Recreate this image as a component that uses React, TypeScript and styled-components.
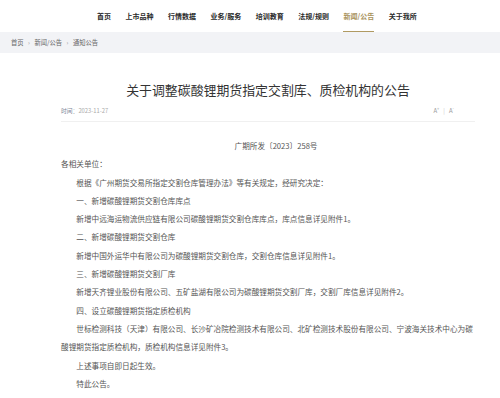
import React from 'react';
import styled, { createGlobalStyle } from 'styled-components';

const GlobalStyle = createGlobalStyle`
  body {
    margin: 0;
    background: #fff;
    font-family: "Noto Sans CJK SC", "Noto Sans", sans-serif;
  }
`;

const Header = styled.header`
  display: flex;
  gap: 14.5px;

  height: 32px;
  padding-left: 97px;
`;

const NavItem = styled.a<{ $active?: boolean }>`
  display: flex;
  align-items: center;

  height: 31px;
  border-bottom: 1px solid ${(p) => (p.$active ? '#b09a62' : 'transparent')};

  font-size: 7px;
  font-weight: 700;
  color: ${(p) => (p.$active ? '#a8925c' : '#2a2a2a')};
  text-decoration: none;
  white-space: nowrap;
`;

const Breadcrumb = styled.nav`
  display: flex;
  align-items: center;
  gap: 4.5px;

  height: 21px;
  padding-left: 11px;

  background: #f2f3f6;

  font-size: 6.3px;
  color: #666;
`;

const Crumb = styled.span``;

const CrumbSep = styled.span`
  color: #999;
  font-size: 6px;
`;

const Main = styled.main`
  padding: 0 25px 0 61px;
`;

const Title = styled.h1`
  margin: 27px 0 0;

  font-size: 12.9px;
  font-weight: 400;
  line-height: 20px;
  text-align: center;
  color: #333;
`;

const MetaRow = styled.div`
  display: flex;
  align-items: center;
  justify-content: space-between;

  height: 10px;
  margin-top: 5px;
  padding-bottom: 6px;
  border-bottom: 1px solid #f0f0f0;

  font-size: 5.8px;
  color: #aaa;
`;

const DateLabel = styled.span`
  color: #7a8396;
`;

const FontTools = styled.div`
  display: flex;
  align-items: center;
  gap: 4px;

  margin-right: 21px;

  color: #999;
  font-size: 6px;

  sup {
    font-size: 4px;
  }
`;

const ToolSep = styled.span`
  color: #ccc;
`;

const Article = styled.article`
  margin-top: 15px;

  font-size: 7.64px;
  line-height: 18.3px;
  color: #555;
`;

const DocNo = styled.p`
  margin: 0;
  padding-left: 16px;
  text-align: center;
`;

const Para = styled.p<{ $indent?: boolean }>`
  margin: 0;
  text-indent: ${(p) => (p.$indent ? '2em' : '0')};
`;

const navs = ['首页', '上市品种', '行情数据', '业务/服务', '培训教育', '法规/规则', '新闻/公告', '关于我所'];

const paragraphs = [
  '根据《广州期货交易所指定交割仓库管理办法》等有关规定，经研究决定：',
  '一、新增碳酸锂期货交割仓库库点',
  '新增中远海运物流供应链有限公司碳酸锂期货交割仓库库点，库点信息详见附件1。',
  '二、新增碳酸锂期货交割仓库',
  '新增中国外运华中有限公司为碳酸锂期货交割仓库，交割仓库信息详见附件1。',
  '三、新增碳酸锂期货交割厂库',
  '新增天齐锂业股份有限公司、五矿盐湖有限公司为碳酸锂期货交割厂库，交割厂库信息详见附件2。',
  '四、设立碳酸锂期货指定质检机构',
  '世标检测科技（天津）有限公司、长沙矿冶院检测技术有限公司、北矿检测技术股份有限公司、宁波海关技术中心为碳酸锂期货指定质检机构，质检机构信息详见附件3。',
  '上述事项自即日起生效。',
  '特此公告。',
];

function App() {
  return (
    <>
      <GlobalStyle />
      <Header>
        {navs.map((n) => (
          <NavItem key={n} href="#" $active={n === '新闻/公告'}>
            {n}
          </NavItem>
        ))}
      </Header>
      <Breadcrumb>
        <Crumb>首页</Crumb>
        <CrumbSep>›</CrumbSep>
        <Crumb>新闻/公告</Crumb>
        <CrumbSep>›</CrumbSep>
        <Crumb>通知公告</Crumb>
      </Breadcrumb>
      <Main>
        <Title>关于调整碳酸锂期货指定交割库、质检机构的公告</Title>
        <MetaRow>
          <span>
            <DateLabel>时间</DateLabel>：2023-11-27
          </span>
          <FontTools>
            <span>
              A<sup>+</sup>
            </span>
            <ToolSep>|</ToolSep>
            <span>
              A<sup>-</sup>
            </span>
          </FontTools>
        </MetaRow>
        <Article>
          <DocNo>广期所发〔2023〕258号</DocNo>
          <Para>各相关单位：</Para>
          {paragraphs.map((p) => (
            <Para key={p} $indent>
              {p}
            </Para>
          ))}
        </Article>
      </Main>
    </>
  );
}

export default App;
